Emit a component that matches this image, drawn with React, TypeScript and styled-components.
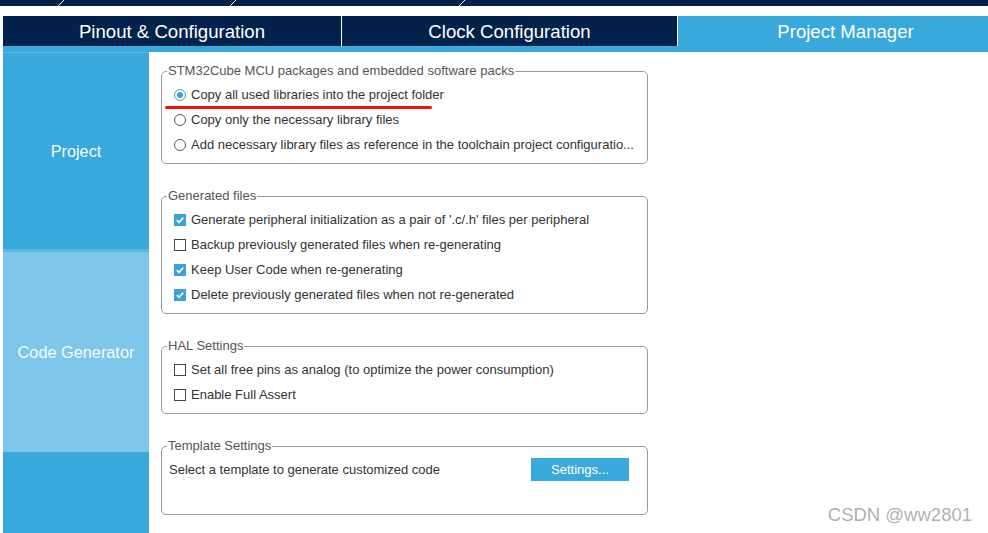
import React from "react";
import styled, { createGlobalStyle } from "styled-components";

const NAVY = "#03224b";
const BLUE = "#39a9db";
const LIGHT = "#7ec7ea";

const Global = createGlobalStyle`
  html, body { margin: 0; padding: 0; background: #fff; }
  body { font-family: "Liberation Sans", Arial, sans-serif; width: 988px; height: 533px; overflow: hidden; }
  * { box-sizing: border-box; }
`;

const Page = styled.div`
  position: relative;
  width: 988px;
  height: 533px;
  display: flex;
  flex-direction: column;
  overflow: hidden;
`;

const TopStrip = styled.div`
  height: 6px;
  background: ${NAVY};
  flex: none;
  svg { display: block; }
`;

const TabBar = styled.div`
  margin: 10px 0 0 3px;
  height: 30px;
  display: flex;
  gap: 1px;
  flex: none;
  overflow: hidden;
`;

const Tab = styled.div<{ $w: number; $active?: boolean }>`
  width: ${(p) => p.$w}px;
  flex: none;
  background: ${(p) => (p.$active ? BLUE : NAVY)};
  color: #fff;
  font-size: 18.6px;
  display: flex;
  align-items: center;
  justify-content: center;
  padding-top: 1px;
`;

const UnderStrip = styled.div`
  margin-left: 3px;
  height: 6px;
  background: ${BLUE};
  flex: none;
`;

const Main = styled.div`
  flex: 1;
  display: flex;
  min-height: 0;
`;

const Sidebar = styled.div`
  width: 146px;
  margin-left: 3px;
  flex: none;
  display: flex;
  flex-direction: column;
  background: ${BLUE};
  border-top: 1px solid #62bde6;
`;

const SideItem = styled.div<{ $h: number; $active?: boolean }>`
  height: ${(p) => p.$h}px;
  flex: none;
  background: ${(p) => (p.$active ? LIGHT : BLUE)};
  color: #f4fbff;
  font-size: 16.3px;
  display: flex;
  align-items: center;
  justify-content: center;
`;

const SideSep = styled.div`
  height: 3px;
  flex: none;
  background: #5bb9e4;
`;

const Content = styled.div`
  padding: 12px 0 0 12px;
  display: flex;
  flex-direction: column;
  gap: 25px;
`;

const Group = styled.fieldset`
  width: 487px;
  margin: 0;
  padding: 0 0 6px 0;
  border: 1px solid #9a9a9a;
  border-radius: 5px;
  min-width: 0;
`;

const Legend = styled.legend`
  margin-left: 5px;
  padding: 0 1px;
  font-size: 13px;
  line-height: 14px;
  color: #555;
`;

const Rows = styled.div`
  padding: 4px 0 0 12px;
  display: flex;
  flex-direction: column;
`;

const Row = styled.div`
  position: relative;
  height: 25px;
  display: flex;
  align-items: center;
  gap: 5px;
  font-size: 13px;
  color: #333;
  white-space: nowrap;
`;

const Radio = styled.span<{ $on?: boolean }>`
  width: 12px;
  height: 12px;
  border-radius: 50%;
  border: 1px solid ${(p) => (p.$on ? "#3a9fd8" : "#555")};
  background: #fff;
  display: flex;
  align-items: center;
  justify-content: center;
  flex: none;
  &::after {
    content: "";
    width: 6px;
    height: 6px;
    border-radius: 50%;
    background: ${(p) => (p.$on ? "#3a9fd8" : "transparent")};
  }
`;

const Box = styled.span<{ $on?: boolean }>`
  width: 12px;
  height: 12px;
  border: 1px solid ${(p) => (p.$on ? "#3aa2da" : "#444")};
  background: ${(p) => (p.$on ? "#3aa2da" : "#fff")};
  display: flex;
  align-items: center;
  justify-content: center;
  flex: none;
  svg { display: block; }
`;

const RedLine = styled.span`
  position: absolute;
  left: -9px;
  width: 267px;
  bottom: -2px;
  height: 3px;
  background: #f01010;
  border-radius: 1.5px;
`;

const TemplateRow = styled.div`
  height: 55px;
  padding: 5px 18px 0 7px;
  display: flex;
  align-items: flex-start;
  justify-content: space-between;
  font-size: 13px;
  color: #333;
`;

const TemplateText = styled.span`
  line-height: 23px;
`;

const Button = styled.button`
  width: 98px;
  height: 23px;
  border: none;
  background: ${BLUE};
  color: #fff;
  font-family: inherit;
  font-size: 13px;
  padding: 0;
`;

const Watermark = styled.div`
  position: absolute;
  right: 16px;
  bottom: 7px;
  font-size: 18.5px;
  color: rgba(140, 140, 140, 0.7);
`;

const Check = () => (
  <svg width="10" height="10" viewBox="0 0 10 10">
    <path d="M1.8 5.2 L4 7.3 L8.3 2.6" fill="none" stroke="#fff" strokeWidth="1.6" />
  </svg>
);

const CheckRow = ({ on, children }: { on?: boolean; children: React.ReactNode }) => (
  <Row>
    <Box $on={on}>{on && <Check />}</Box>
    <span>{children}</span>
  </Row>
);

export default function App() {
  return (
    <Page>
      <Global />
      <TopStrip>
        <svg width="988" height="6">
          <line x1="58" y1="6" x2="64" y2="0" stroke="#fff" strokeWidth="1" />
          <line x1="230" y1="6" x2="236" y2="0" stroke="#fff" strokeWidth="1" />
          <line x1="459" y1="6" x2="465" y2="0" stroke="#fff" strokeWidth="1" />
        </svg>
      </TopStrip>
      <TabBar>
        <Tab $w={338}>Pinout &amp; Configuration</Tab>
        <Tab $w={335}>Clock Configuration</Tab>
        <Tab $w={335} $active>Project Manager</Tab>
      </TabBar>
      <UnderStrip />
      <Main>
        <Sidebar>
          <SideItem $h={196}>Project</SideItem>
          <SideSep />
          <SideItem $h={200} $active>Code Generator</SideItem>
        </Sidebar>
        <Content>
          <Group>
            <Legend>STM32Cube MCU packages and embedded software packs</Legend>
            <Rows>
              <Row>
                <Radio $on />
                <span>Copy all used libraries into the project folder</span>
                <RedLine />
              </Row>
              <Row>
                <Radio />
                <span>Copy only the necessary library files</span>
              </Row>
              <Row>
                <Radio />
                <span>Add necessary library files as reference in the toolchain project configuratio...</span>
              </Row>
            </Rows>
          </Group>
          <Group>
            <Legend>Generated files</Legend>
            <Rows>
              <CheckRow on>Generate peripheral initialization as a pair of '.c/.h' files per peripheral</CheckRow>
              <CheckRow>Backup previously generated files when re-generating</CheckRow>
              <CheckRow on>Keep User Code when re-generating</CheckRow>
              <CheckRow on>Delete previously generated files when not re-generated</CheckRow>
            </Rows>
          </Group>
          <Group>
            <Legend>HAL Settings</Legend>
            <Rows>
              <CheckRow>Set all free pins as analog (to optimize the power consumption)</CheckRow>
              <CheckRow>Enable Full Assert</CheckRow>
            </Rows>
          </Group>
          <Group>
            <Legend>Template Settings</Legend>
            <TemplateRow>
              <TemplateText>Select a template to generate customized code</TemplateText>
              <Button>Settings...</Button>
            </TemplateRow>
          </Group>
        </Content>
      </Main>
      <Watermark>CSDN @ww2801</Watermark>
    </Page>
  );
}
